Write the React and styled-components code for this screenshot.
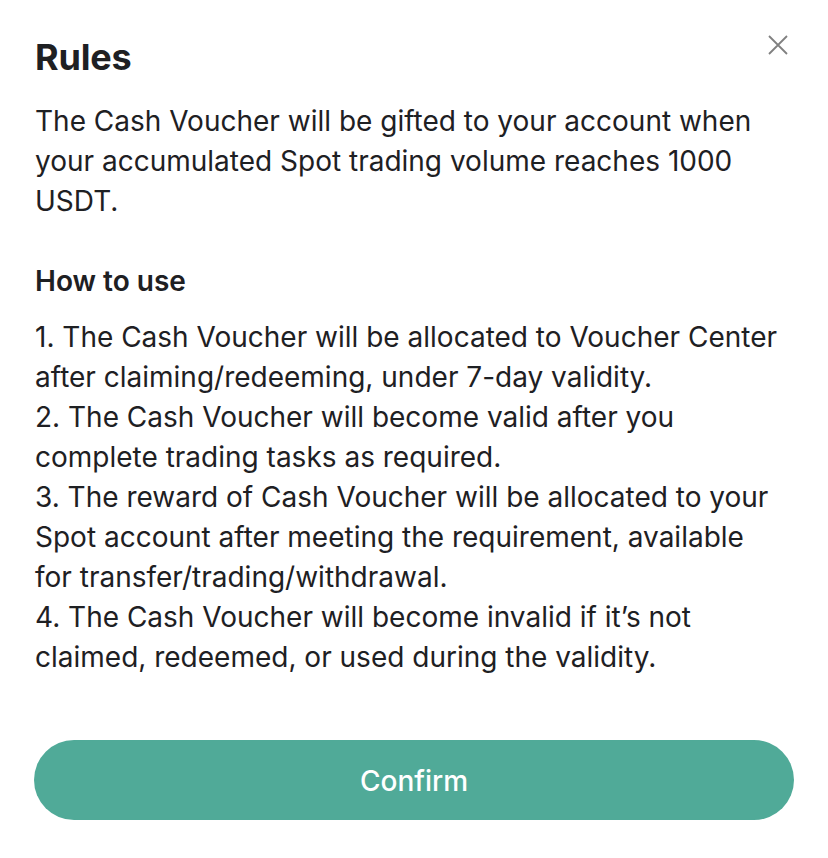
import React from "react";
import styled, { createGlobalStyle } from "styled-components";

const Global = createGlobalStyle`
  html, body { margin: 0; padding: 0; background: #ffffff; }
  body { font-family: Inter, "Noto Sans", sans-serif; color: #1e2023; }
`;

const Dialog = styled.div`
  box-sizing: border-box;
  width: 828px;
  height: 858px;
  padding: 37px 34px 38px 35px;
  display: flex;
  flex-direction: column;
  background: #fff;
`;

const Header = styled.div`
  display: flex;
  justify-content: space-between;
  align-items: flex-start;
`;

const Title = styled.h1`
  margin: 0;
  font-size: 36px;
  line-height: 40px;
  font-weight: 700;
  letter-spacing: -0.2px;
`;

const Close = styled.button`
  border: 0;
  background: none;
  padding: 0;
  margin: -2px 6px 0 0;
  width: 20px;
  height: 20px;
  cursor: pointer;
  display: flex;
  align-items: center;
  justify-content: center;
`;

const Text = styled.p`
  margin: ${(p) => p.$mt || 0}px 0 0;
  max-width: 748px;
  font-size: 28px;
  line-height: 40px;
  font-weight: ${(p) => (p.$bold ? 600 : 400)};
  letter-spacing: 0;
`;

const Spacer = styled.div`
  flex: 1;
`;

const Confirm = styled.button`
  height: 80px;
  width: 760px;
  margin-left: -1px;
  padding: 2px 0 0;
  border: 0;
  border-radius: 40px;
  background: #50aa98;
  color: #fff;
  font-family: Inter, "Noto Sans", sans-serif;
  font-size: 28px;
  font-weight: 500;
  cursor: pointer;
`;

const rules = [
  "1. The Cash Voucher will be allocated to Voucher Center after claiming/redeeming, under 7-day validity.",
  "2. The Cash Voucher will become valid after you complete trading tasks as required.",
  "3. The reward of Cash Voucher will be allocated to your Spot account after meeting the requirement, available for transfer/trading/withdrawal.",
  "4. The Cash Voucher will become invalid if it\u2019s not claimed, redeemed, or used during the validity.",
];

export default function App() {
  return (
    <>
      <Global />
      <Dialog>
        <Header>
          <Title>Rules</Title>
          <Close aria-label="Close">
            <svg width="20" height="20" viewBox="0 0 20 20">
              <path d="M1 1 L19 19 M19 1 L1 19" stroke="#808080" strokeWidth="1.8" />
            </svg>
          </Close>
        </Header>
        <Text $mt={24}>
          The Cash Voucher will be gifted to your account when your accumulated Spot trading volume reaches 1000 USDT.
        </Text>
        <Text $mt={40} $bold>How to use</Text>
        <Text $mt={16}>
          {rules.map((r, i) => (
            <React.Fragment key={i}>
              {i > 0 && <br />}
              {r}
            </React.Fragment>
          ))}
        </Text>
        <Spacer />
        <Confirm>Confirm</Confirm>
      </Dialog>
    </>
  );
}
